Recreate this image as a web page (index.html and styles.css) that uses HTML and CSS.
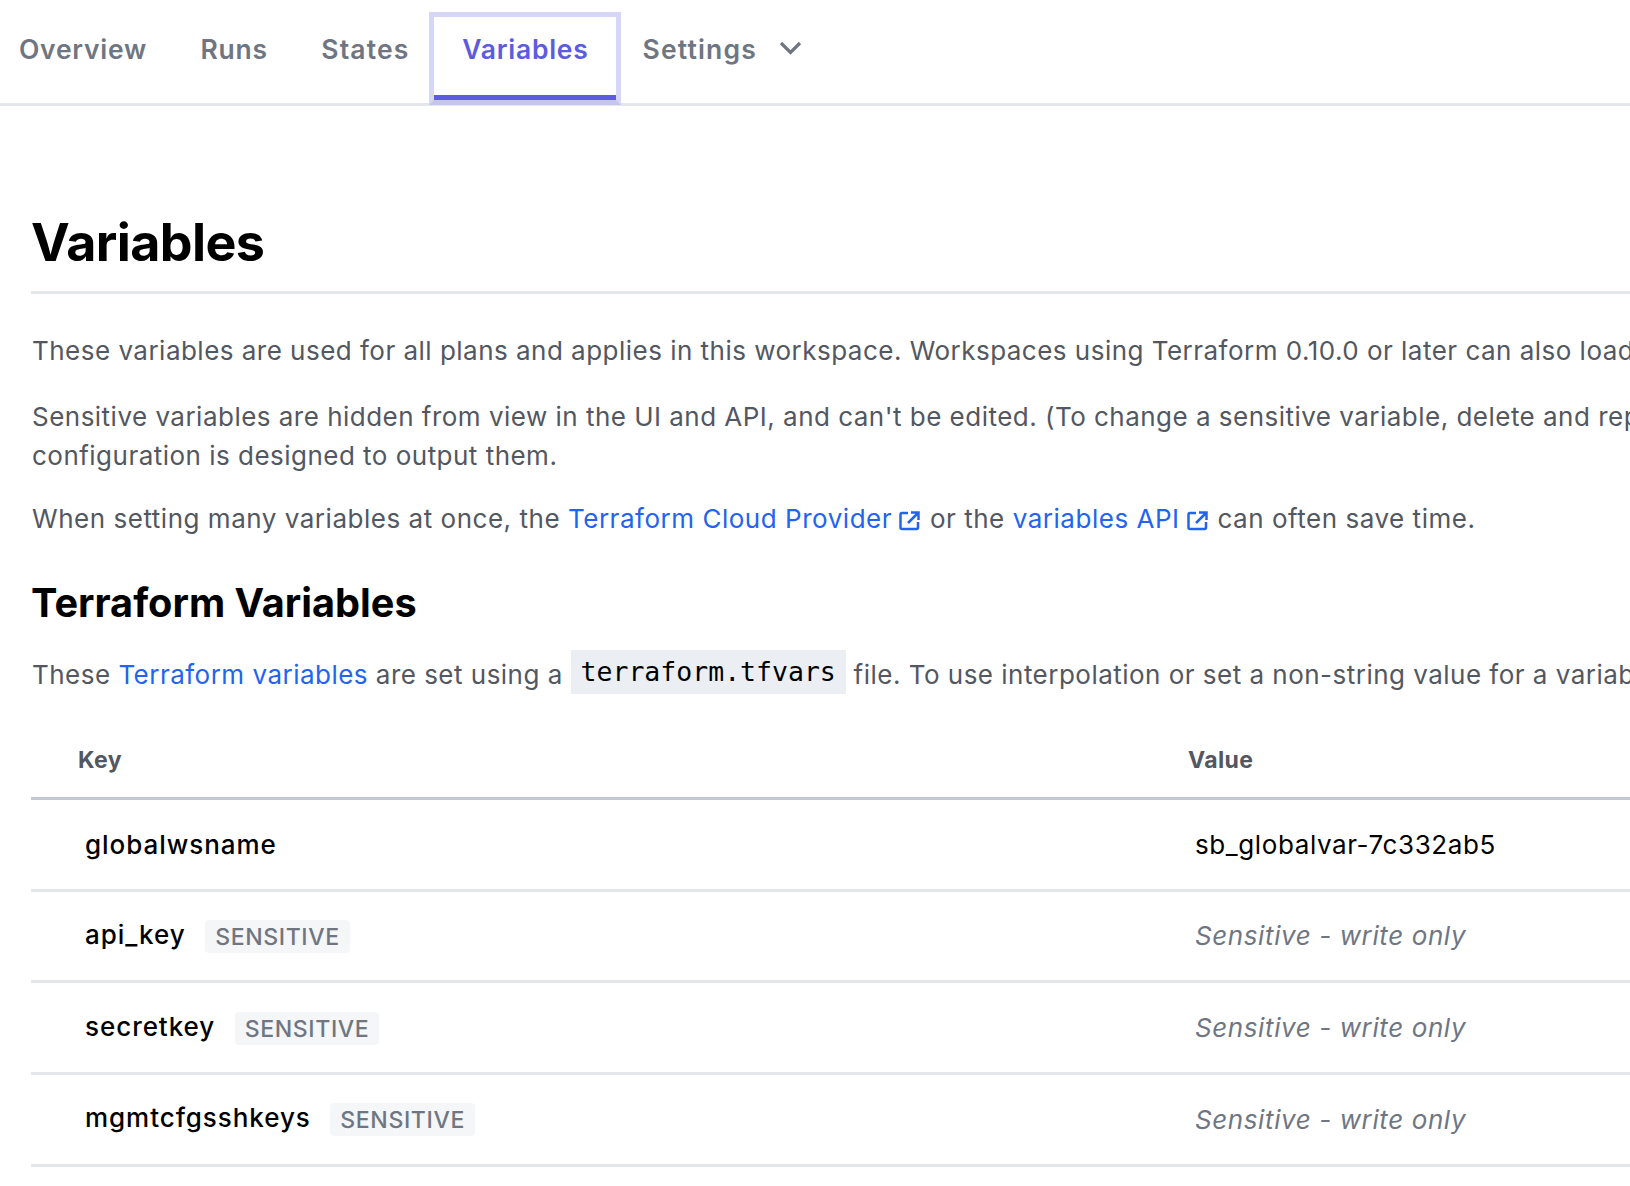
FILE: index.html
```html
<!DOCTYPE html>
<html lang="en">
<head>
<meta charset="utf-8">
<title>Variables</title>
<link rel="stylesheet" href="styles.css">
</head>
<body>
<nav class="tabs">
  <a class="tab">Overview</a>
  <a class="tab">Runs</a>
  <a class="tab tab-wide">States</a>
  <a class="tab tab-active">Variables</a>
  <a class="tab tab-wide">Settings<svg class="chevron" viewBox="0 0 24 24" width="24" height="24"><path d="M3 7l9.500 9.500L22 7" fill="none" stroke="currentColor" stroke-width="3.200"/></svg></a>
</nav>
<main class="content">
  <h1>Variables</h1>
  <p class="p-first">These variables are used for all plans and applies in this workspace. Workspaces using Terraform 0.10.0 or later can also load default values from any *.auto.tfvars files in the configuration.</p>
  <p class="p-second">Sensitive variables are hidden from view in the UI and API, and can't be edited. (To change a sensitive variable, delete and replace it.) Sensitive variables can appear in logs if your<br>configuration is designed to output them.</p>
  <p class="p-third">When setting many variables at once, the <a class="link">Terraform Cloud Provider<svg class="ext" viewBox="0 0 21 20" width="21" height="20"><path d="M9 2H3a1.500 1.500 0 0 0-1.500 1.500v13A1.500 1.500 0 0 0 3 18h14.500a1.500 1.500 0 0 0 1.500-1.500V11M12 1.500h7.500V9M19.500 1.500L9 12" fill="none" stroke="currentColor" stroke-width="2.500"/></svg></a> or the <a class="link">variables API<svg class="ext" viewBox="0 0 21 20" width="21" height="20"><path d="M9 2H3a1.500 1.500 0 0 0-1.500 1.500v13A1.500 1.500 0 0 0 3 18h14.500a1.500 1.500 0 0 0 1.500-1.500V11M12 1.500h7.500V9M19.500 1.500L9 12" fill="none" stroke="currentColor" stroke-width="2.500"/></svg></a> can often save time.</p>
  <h2>Terraform Variables</h2>
  <p class="p-code">These <a class="link">Terraform variables</a> are set using a <code>terraform.tfvars</code> file. To use interpolation or set a non-string value for a variable, edit the variable and select the HCL checkbox.</p>
  <section class="table">
    <div class="row head"><div class="key">Key</div><div class="val">Value</div></div>
    <div class="row"><div class="key"><b>globalwsname</b></div><div class="val">sb_globalvar-7c332ab5</div></div>
    <div class="row"><div class="key"><b>api_key</b><span class="badge">SENSITIVE</span></div><div class="val secret">Sensitive - write only</div></div>
    <div class="row"><div class="key"><b>secretkey</b><span class="badge">SENSITIVE</span></div><div class="val secret">Sensitive - write only</div></div>
    <div class="row"><div class="key"><b>mgmtcfgsshkeys</b><span class="badge">SENSITIVE</span></div><div class="val secret">Sensitive - write only</div></div>
  </section>
</main>
</body>
</html>
```
FILE: styles.css
```css
* { box-sizing: border-box; }
html, body { margin: 0; height: 100%; overflow: hidden; background: #fff; }
body { width: 1630px; height: 1186px; font-family: Inter, "Liberation Sans", sans-serif; color: #525761; }

.tabs { display: flex; align-items: stretch; height: 106px; border-bottom: 3px solid #e3e6ea; padding-top: 12px; padding-left: 19px; gap: 53.500px; font-size: 26.5px; font-weight: 600; letter-spacing: .75px; color: #6f7682; }
.tab { display: flex; align-items: flex-start; padding-top: 19px; line-height: 36px; white-space: nowrap; }
.tab-wide { letter-spacing: 1.15px; }
.tab-active { color: #5c5ce0; margin: 0 -31.500px 0 -33.800px; padding: 14px 27px 0 28px; height: 93px; border: 5px solid #d6d6f8; border-bottom-color: #c6c6ec; box-shadow: inset 0 -5px 0 #5c5ce0; }
.chevron { margin-left: 21px; margin-top: 5px; color: #6f7682; }

.content { padding: 0 0 0 32px; width: 2600px; }
h1 { margin: 101px 0 0 -1px; padding: 0 0 12px; font-size: 52px; line-height: 72px; font-weight: 700; color: #000; border-bottom: 3px solid #e3e6ea; letter-spacing: -.6px; }
p { margin: 0 0 26px; font-size: 26px; line-height: 38.500px; letter-spacing: .48px; white-space: nowrap; color: #525761; }
.p-first { margin-top: 38px; margin-bottom: 27.500px; }
.p-second { margin-bottom: 24.500px; }
.p-third { letter-spacing: .525px; margin-bottom: 37.500px; }
.p-code { margin-bottom: 28px; }
h2 { margin: 0 0 20px -1px; font-size: 39.700px; line-height: 54px; font-weight: 700; color: #000; }
.link { color: #2264f0; }
.ext { vertical-align: -3px; margin-left: 7px; margin-right: 2px; }
code { display: inline-block; font-family: "DejaVu Sans Mono", monospace; font-size: 26.5px; letter-spacing: 0; line-height: 44px; height: 44px; padding: 0 10px; background: #ebeef2; color: #000; vertical-align: 3px; }

.table { margin-left: -1px; }
.row { display: grid; grid-template-columns: 1110px 1fr; height: 91.670px; align-items: center; border-bottom: 3px solid #e3e6ea; padding-left: 54px; font-size: 26px; letter-spacing: .6px; color: #000; }
.head { height: 78px; border-bottom-color: #c4c8d2; padding-left: 47px; font-size: 23px; font-weight: 700; color: #525761; letter-spacing: .4px; }
.row b { font-weight: 550; letter-spacing: .95px; }
.secret { font-style: italic; color: #6f7682; }
.badge { display: inline-block; margin-left: 19.500px; padding: 0 10px; height: 33px; line-height: 34px; background: #f5f6f8; border-radius: 4px; font-size: 23.100px; font-weight: 500; color: #6f7682; vertical-align: -1px; }
```
